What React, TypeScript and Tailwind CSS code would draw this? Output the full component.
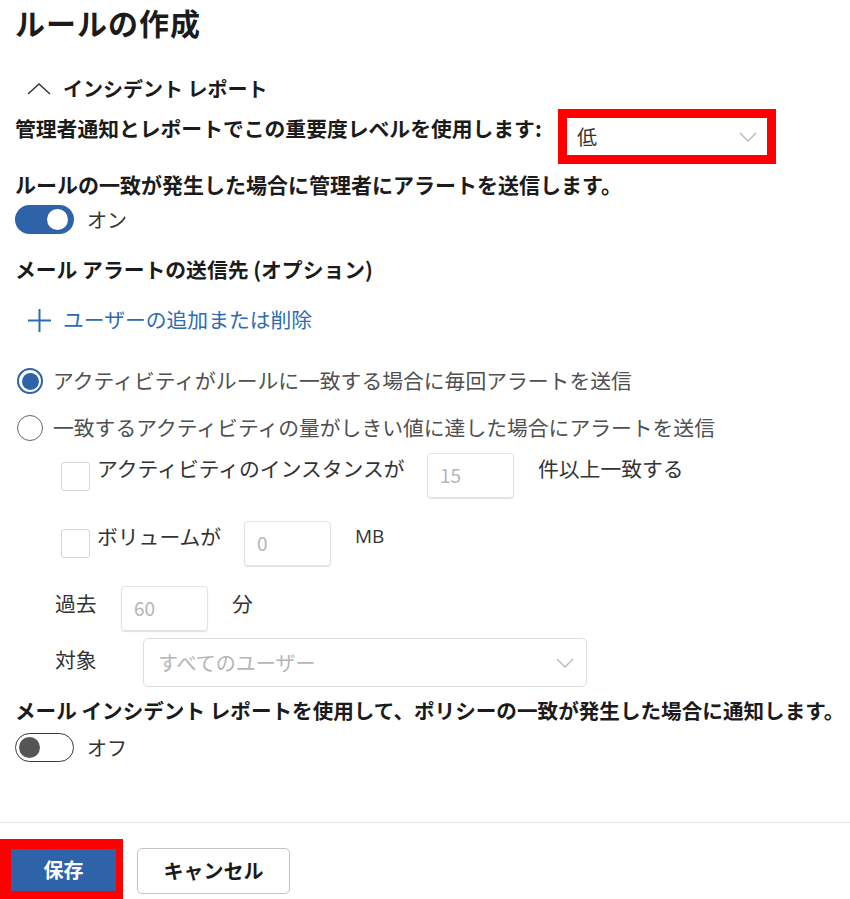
import React, { useState } from "react";

const jp = { fontFamily: '"Noto Sans CJK JP", "Noto Sans", sans-serif' };

const Chevron: React.FC<{ className?: string }> = ({ className }) => (
  <svg width="18" height="10" viewBox="0 0 18 10" className={className} fill="none">
    <path d="M1 1l8 8 8-8" stroke="#b8b8b8" strokeWidth="1.3" />
  </svg>
);

const Toggle: React.FC<{ on: boolean; onClick: () => void }> = ({ on, onClick }) =>
  on ? (
    <button onClick={onClick} className="relative w-[59px] h-[29px] rounded-full bg-[#2e63a9] shrink-0">
      <span className="absolute right-[6px] top-[4px] w-[21px] h-[21px] rounded-full bg-white" />
    </button>
  ) : (
    <button onClick={onClick} className="relative w-[59px] h-[29px] rounded-full border-[1.5px] border-[#3a3a3a] bg-white shrink-0">
      <span className="absolute left-[3px] top-[2.5px] w-[21px] h-[21px] rounded-full bg-[#555]" />
    </button>
  );

const NumBox: React.FC<{ value: string }> = ({ value }) => (
  <div className="w-[87px] h-[45px] rounded-[4px] border border-[#e2e2e2] shadow-[0_1px_1px_rgba(0,0,0,0.12)] flex items-center pl-[12px] text-[19px] text-[#b5b5b5] shrink-0">
    {value}
  </div>
);

const CheckBox = () => (
  <div className="w-[29px] h-[29px] rounded-[3px] border border-[#d6d6d6] bg-white shrink-0" />
);

export default function App() {
  const [alertOn, setAlertOn] = useState(true);
  const [reportOn, setReportOn] = useState(false);
  const [mode, setMode] = useState(0);

  return (
    <div style={jp} className="w-[850px] h-[899px] bg-white text-[#1b1b1b] overflow-hidden">
      <div className="px-[15px]">
        <h1 className="h-[44px] leading-[44px] text-[30px] font-bold tracking-[1px]">ルールの作成</h1>

        {/* section header */}
        <div className="mt-[30px] h-[30px] flex items-center">
          <svg width="24" height="12" viewBox="0 0 24 12" fill="none" className="ml-[12px]">
            <path d="M1 11L12 1l11 10" stroke="#333" strokeWidth="1.4" />
          </svg>
          <span className="ml-[12px] text-[20px] font-bold">インシデント レポート</span>
        </div>

        {/* severity */}
        <div className="mt-[5px] flex items-start">
          <span className="w-[543px] shrink-0 mt-[4px] leading-[30px] text-[20.8px] font-bold">
            管理者通知とレポートでこの重要度レベルを使用します:
          </span>
          <div className="bg-[#ff0000] p-[9px]">
            <div className="w-[200px] h-[37px] bg-white flex items-center justify-between pl-[10px] pr-[10px]">
              <span className="text-[20px] text-[#333]">低</span>
              <Chevron />
            </div>
          </div>
        </div>

        <p className="mt-[5px] leading-[30px] text-[21px] font-bold">
          ルールの一致が発生した場合に管理者にアラートを送信します。
        </p>
        <div className="mt-[6px] h-[29px] flex items-center gap-[13px]">
          <Toggle on={alertOn} onClick={() => setAlertOn(!alertOn)} />
          <span className="text-[20px] text-[#333]">{alertOn ? "オン" : "オフ"}</span>
        </div>

        <p className="mt-[20px] leading-[30px] text-[20.8px] font-bold">メール アラートの送信先 (オプション)</p>

        <button className="mt-[21px] h-[30px] flex items-center text-[#2b6cb3]">
          <svg width="23" height="23" viewBox="0 0 23 23" className="ml-[13px]">
            <path d="M11.5 0v23M0 11.5h23" stroke="#2b6cb3" strokeWidth="2" />
          </svg>
          <span className="ml-[12px] text-[20.8px]">ユーザーの追加または削除</span>
        </button>

        {/* radios */}
        <div className="mt-[31px] h-[30px] flex items-center cursor-pointer" onClick={() => setMode(0)}>
          <span className={`ml-[2px] w-[26px] h-[26px] rounded-full border-2 flex items-center justify-center shrink-0 ${mode === 0 ? "border-[#2e63a9]" : "border-[#666]"}`}>
            {mode === 0 && <span className="w-[17px] h-[17px] rounded-full bg-[#2e63a9]" />}
          </span>
          <span className="ml-[10px] text-[20.8px] text-[#505050]">アクティビティがルールに一致する場合に毎回アラートを送信</span>
        </div>
        <div className="mt-[17px] h-[30px] flex items-center cursor-pointer" onClick={() => setMode(1)}>
          <span className={`ml-[2px] w-[26px] h-[26px] rounded-full border-[1.5px] flex items-center justify-center shrink-0 ${mode === 1 ? "border-[#2e63a9]" : "border-[#666]"}`}>
            {mode === 1 && <span className="w-[17px] h-[17px] rounded-full bg-[#2e63a9]" />}
          </span>
          <span className="ml-[10px] text-[20.8px] text-[#505050]">一致するアクティビティの量がしきい値に達した場合にアラートを送信</span>
        </div>

        {/* threshold rows */}
        <div className="mt-[10px] flex items-start pl-[46px] text-[20.8px] text-[#333]">
          <div className="mt-[9px]"><CheckBox /></div>
          <span className="ml-[7px] leading-[30px] w-[330px] shrink-0">アクティビティのインスタンスが</span>
          <NumBox value="15" />
          <span className="ml-[24px] leading-[30px]">件以上一致する</span>
        </div>
        <div className="mt-[23px] flex items-start pl-[46px] text-[20.8px] text-[#333]">
          <div className="mt-[8px]"><CheckBox /></div>
          <span className="ml-[7px] leading-[30px] w-[147px] shrink-0">ボリュームが</span>
          <NumBox value="0" />
          <span className="ml-[24px] leading-[30px] text-[19px]" style={{ fontFamily: '"Open Sans", sans-serif' }}>MB</span>
        </div>
        <div className="mt-[20px] flex items-start pl-[40px] text-[20.8px] text-[#333]">
          <span className="mt-[2px] leading-[30px] w-[66px] shrink-0">過去</span>
          <NumBox value="60" />
          <span className="ml-[24px] mt-[2px] leading-[30px]">分</span>
        </div>
        <div className="mt-[7px] flex items-start pl-[40px] text-[20.8px] text-[#333]">
          <span className="mt-[6px] leading-[30px] w-[88px] shrink-0">対象</span>
          <div className="w-[444px] h-[49px] rounded-[5px] border border-[#dedede] flex items-center justify-between pl-[14px] pr-[12px]">
            <span className="text-[20px] text-[#b5b5b5]">すべてのユーザー</span>
            <Chevron />
          </div>
        </div>

        <p className="mt-[8px] leading-[30px] text-[20.6px] font-bold whitespace-nowrap">
          メール インシデント レポートを使用して、ポリシーの一致が発生した場合に通知します。
        </p>
        <div className="mt-[8px] h-[29px] flex items-center gap-[13px]">
          <Toggle on={reportOn} onClick={() => setReportOn(!reportOn)} />
          <span className="text-[20px] text-[#333]">{reportOn ? "オン" : "オフ"}</span>
        </div>
      </div>

      <div className="mt-[60px] border-t border-[#e3e3e3]" />

      {/* footer */}
      <div className="mt-[16px] flex items-start">
        <div className="bg-[#ff0000] pl-[11px] pr-[7px] pt-[10px] pb-[9px]">
          <button className="w-[105px] h-[42px] bg-[#2e63a9] text-white text-[20px] font-bold">保存</button>
        </div>
        <button className="ml-[14px] mt-[9px] w-[153px] h-[46px] rounded-[5px] border border-[#c4c4c4] bg-white text-[20px] font-bold text-[#1b1b1b]">
          キャンセル
        </button>
      </div>
    </div>
  );
}
